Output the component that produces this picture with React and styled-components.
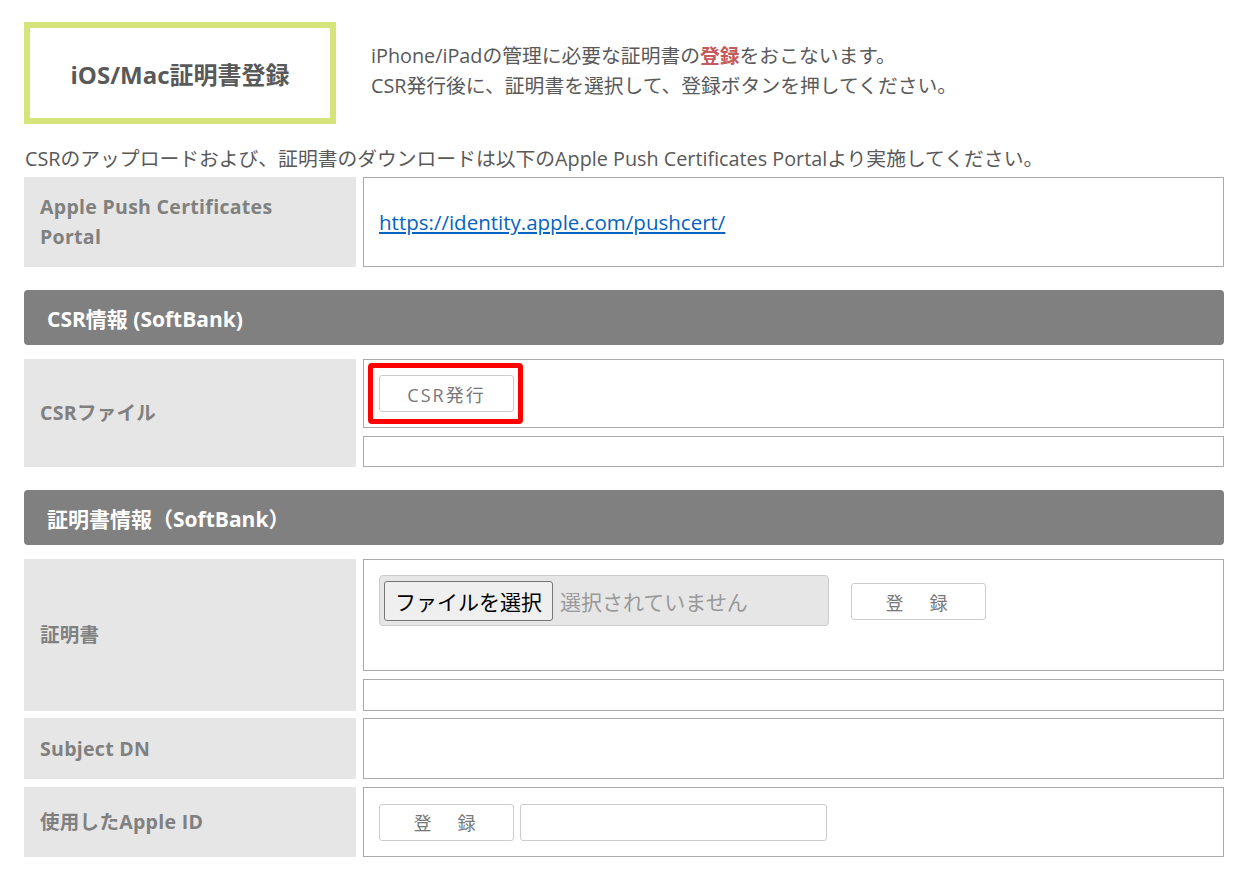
import React from 'react';
import styled, { createGlobalStyle } from 'styled-components';

const GlobalStyle = createGlobalStyle`
  body {
    margin: 0;
    background: #fff;
    font-family: "Open Sans", "Noto Sans CJK JP", sans-serif;
    color: #595959;
  }
`;

const Page = styled.div`
  width: 1200px;
  padding: 22px 0 0 24px;
`;

const Intro = styled.div`display: flex; align-items: flex-start;`;

const TitleBox = styled.div`
  box-sizing: border-box;
  width: 312px; height: 102px;
  border: 6px solid #d6e47c;
  display: flex; align-items: center; justify-content: center;
  font-size: 24px; font-weight: 700; color: #595959;
`;

const Description = styled.div`
  margin-left: 35px; padding-top: 19px;
  font-size: 19.8px; line-height: 30px;
`;

const Emph = styled.strong`color: #c55a5a;`;

const Note = styled.p`
  margin: 22px 0 6px 1px;
  font-size: 19.8px; line-height: 25px;
`;

const Row = styled.div`
  display: grid;
  grid-template-columns: 332px 1fr;
  column-gap: 7px;
  margin-top: ${({ gap }) => gap || 0}px;
`;

const Label = styled.div`
  background: #e6e6e6;
  display: flex; align-items: center;
  padding: 0 16px;
  min-height: ${({ h }) => h}px;
  font-size: 19.5px; font-weight: 700; line-height: 30px;
  letter-spacing: 0.3px;
  color: #808080;
`;

const Cells = styled.div`display: flex; flex-direction: column; gap: 8px;`;

const Cell = styled.div`
  box-sizing: border-box;
  height: ${({ h }) => h}px;
  border: 1px solid #aaa;
  display: flex; align-items: ${({ top }) => (top ? 'flex-start' : 'center')};
  padding: ${({ pad }) => pad || '0 15px'};
`;

const Link = styled.a`
  color: #0563c1; font-size: 20.5px; text-decoration: underline;
`;

const SectionHead = styled.div`
  margin-top: 23px; margin-bottom: 14px;
  height: 55px; border-radius: 4px;
  background: #808080; color: #fff;
  display: flex; align-items: center;
  padding-left: 23px;
  font-size: 21px; font-weight: 700;
`;

const Highlight = styled.div`
  display: inline-flex;
  border: 5px solid #ff0000; border-radius: 4px;
  padding: 7px 4px 7px 6px;
`;

const Button = styled.button`
  box-sizing: border-box;
  width: 135px; height: 37px;
  background: #fff;
  border: 1px solid #ccc; border-radius: 3px;
  color: #777;
  font-family: inherit; font-size: 18px;
  letter-spacing: ${({ spacing }) => spacing || 2}px;
  margin-left: ${({ ml }) => ml || 0}px;
  margin-top: ${({ mt }) => mt || 0}px;
  padding: 0;
`;

const FileBox = styled.div`
  box-sizing: border-box;
  width: 450px; height: 51px;
  background: #e6e6e6;
  border: 1px solid #ccc; border-radius: 4px;
  display: flex; align-items: center;
  padding-left: 4px;
`;

const FileButton = styled.button`
  box-sizing: border-box;
  height: 40px; padding: 0 10px;
  background: #efefef;
  border: 1px solid #767676; border-radius: 3px;
  color: #000; font-family: inherit; font-size: 21px;
`;

const FileHint = styled.span`margin-left: 7px; color: #999; font-size: 21px;`;

const TextInput = styled.input`
  box-sizing: border-box;
  width: 307px; height: 37px; margin-left: 6px;
  border: 1px solid #ccc; border-radius: 3px;
`;

export default function App() {
  return (
    <>
      <GlobalStyle />
      <Page>
        <Intro>
          <TitleBox>iOS/Mac証明書登録</TitleBox>
          <Description>
            iPhone/iPadの管理に必要な証明書の<Emph>登録</Emph>をおこないます。<br />
            CSR発行後に、証明書を選択して、登録ボタンを押してください。
          </Description>
        </Intro>

        <Note>CSRのアップロードおよび、証明書のダウンロードは以下のApple Push Certificates Portalより実施してください。</Note>

        <Row>
          <Label h={90}>Apple Push Certificates<br />Portal</Label>
          <Cells>
            <Cell h={90}>
              <Link href="#">https://identity.apple.com/pushcert/</Link>
            </Cell>
          </Cells>
        </Row>

        <SectionHead>CSR情報 (SoftBank)</SectionHead>
        <Row>
          <Label h={108}>CSRファイル</Label>
          <Cells>
            <Cell h={69} top pad="3px 4px">
              <Highlight><Button>CSR発行</Button></Highlight>
            </Cell>
            <Cell h={31} />
          </Cells>
        </Row>

        <SectionHead>証明書情報（SoftBank）</SectionHead>
        <Row>
          <Label h={152}>証明書</Label>
          <Cells>
            <Cell h={112} top pad="15px 15px">
              <FileBox>
                <FileButton>ファイルを選択</FileButton>
                <FileHint>選択されていません</FileHint>
              </FileBox>
              <Button ml={22} mt={8} spacing={4}>登　録</Button>
            </Cell>
            <Cell h={32} />
          </Cells>
        </Row>
        <Row gap={7}>
          <Label h={61}>Subject DN</Label>
          <Cells><Cell h={61} /></Cells>
        </Row>
        <Row gap={8}>
          <Label h={70}>使用したApple ID</Label>
          <Cells>
            <Cell h={70}>
              <Button spacing={4}>登　録</Button>
              <TextInput />
            </Cell>
          </Cells>
        </Row>
      </Page>
    </>
  );
}
